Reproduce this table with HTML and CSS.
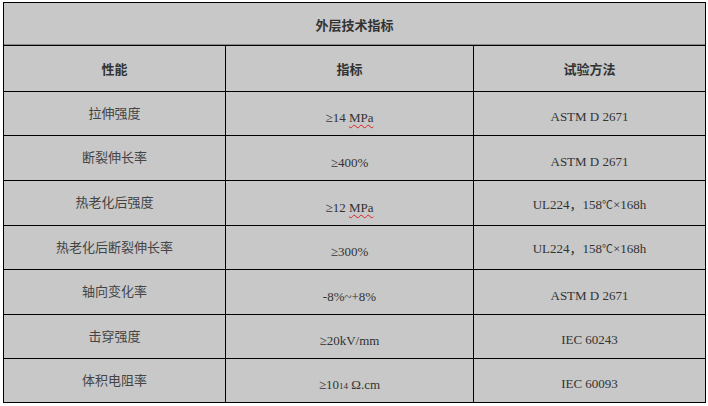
FILE: index.html
```html
<!DOCTYPE html>
<html lang="zh">
<head>
<meta charset="utf-8">
<title>外层技术指标</title>
<link rel="stylesheet" href="styles.css">
</head>
<body>
<table class="spec">
  <colgroup>
    <col class="c1"><col class="c2"><col class="c3">
  </colgroup>
  <tr class="r-title"><th colspan="3" class="title">外层技术指标</th></tr>
  <tr class="r-head"><th>性能</th><th>指标</th><th>试验方法</th></tr>
  <tr class="r44"><td class="name">拉伸强度</td><td class="val low">≥14 <span class="spell">MPa</span></td><td class="val mid">ASTM D 2671</td></tr>
  <tr class="r45"><td class="name">断裂伸长率</td><td class="val low">≥400%</td><td class="val mid">ASTM D 2671</td></tr>
  <tr class="r45"><td class="name">热老化后强度</td><td class="val low">≥12 <span class="spell">MPa</span></td><td class="val">UL224，158<span class="deg">℃</span>×168h</td></tr>
  <tr class="r44"><td class="name">热老化后断裂伸长率</td><td class="val low">≥300%</td><td class="val">UL224，158<span class="deg">℃</span>×168h</td></tr>
  <tr class="r45"><td class="name">轴向变化率</td><td class="val low">-8%~+8%</td><td class="val mid">ASTM D 2671</td></tr>
  <tr class="r44"><td class="name">击穿强度</td><td class="val low">≥20kV/mm</td><td class="val mid">IEC 60243</td></tr>
  <tr class="r44"><td class="name">体积电阻率</td><td class="val low">≥10<span class="exp">14</span> Ω.cm</td><td class="val mid">IEC 60093</td></tr>
</table>
</body>
</html>
```

FILE: styles.css
```css
html, body {
  margin: 0;
  padding: 0;
  background: #ffffff;
}

body {
  padding: 2px 0 0 3px;
}

.spec {
  border-collapse: collapse;
  table-layout: fixed;
  width: 702px;
  background: #c8c8c8;
  color: #3a3a3a;
}

.c1 { width: 222px; }
.c2 { width: 248px; }
.c3 { width: 232px; }

.spec th,
.spec td {
  border: 1px solid #000;
  padding: 0;
  text-align: center;
  vertical-align: middle;
}

.spec th {
  font-family: "Noto Sans CJK SC", "Noto Sans", sans-serif;
  font-size: 13px;
  font-weight: bold;
  color: #333;
}

.title {
  padding-top: 4px;
  border-bottom: 1px solid #000;
  box-shadow: inset 0 -1px 0 #8a8a8a;
}

.r-title { height: 43px; }
.r-head { height: 46px; }
.r44 { height: 44px; }
.r45 { height: 45px; }

.spec td.name {
  font-family: "Noto Sans CJK SC", "Noto Sans", sans-serif;
  font-size: 13px;
  color: #444;
  padding-bottom: 3px;
}

.val {
  font-family: "Liberation Serif", "Noto Sans CJK SC", serif;
  font-size: 13px;
  color: #333;
  padding-top: 2px;
}

.val.low { padding-top: 9px; }
.val.mid { padding-top: 7px; }

.spell {
  text-decoration: underline wavy #e02020;
  text-decoration-thickness: 1px;
  text-underline-offset: 2px;
}

.exp {
  font-size: 9px;
}

.deg {
  font-size: 11px;
}
```
